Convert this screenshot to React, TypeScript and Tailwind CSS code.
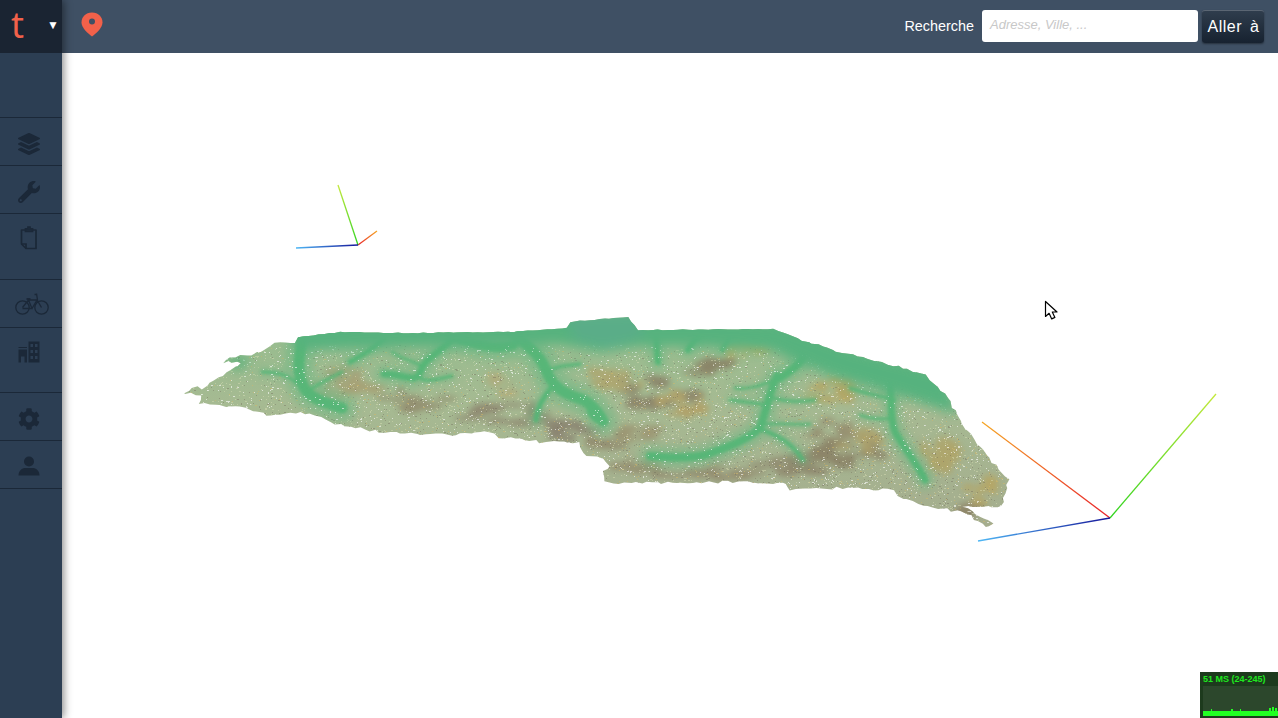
import React, { useMemo } from "react";
import { FaLayerGroup, FaWrench, FaCog } from "react-icons/fa";

const outline: [number, number][] = [
  [185,392],[193,387],[203,388],[213,380],[223,375],[235,367],[242,363],[223,362],[230,358],[257,353],[280,342],[295,343],[298,337],[340,332],[393,333],[513,332],[567,328],[570,322],[600,319],[628,317],[638,330],[773,329],[803,340],[837,352],[873,360],[927,375],[937,387],[948,398],[960,420],[980,447],[1008,480],[1002,507],[963,507],[993,523],[987,528],[967,513],[937,508],[913,502],[897,496],[893,490],[837,488],[790,490],[787,483],[723,482],[657,483],[620,483],[603,481],[603,471],[610,467],[603,458],[587,457],[578,442],[540,442],[500,437],[490,432],[447,435],[380,432],[330,423],[310,413],[267,415],[240,407],[200,404],[202,395],[185,393],
];

function rng(seed: number) {
  let s = seed;
  return () => {
    s = (s * 1664525 + 1013904223) % 4294967296;
    return s / 4294967296;
  };
}

function buildPolygon() {
  const r = rng(7);
  const pts: string[] = [];
  outline.forEach((p, i) => {
    const q = outline[(i + 1) % outline.length];
    const d = Math.hypot(q[0] - p[0], q[1] - p[1]);
    const n = Math.max(1, Math.round(d / 5));
    const amp = p[1] < 345 && q[1] < 345 ? 0.4 : 1.4;
    for (let k = 0; k < n; k++) {
      const t = k / n;
      pts.push(`${(p[0] + (q[0] - p[0]) * t + (r() - 0.5) * amp * 2).toFixed(1)},${(p[1] + (q[1] - p[1]) * t + (r() - 0.5) * amp * 2).toFixed(1)}`);
    }
  });
  return pts.join(" ");
}

function speckles(seed: number, count: number, bias: number) {
  const r = rng(seed);
  let d = "";
  for (let i = 0; i < count; i++) {
    const x = Math.round(185 + r() * 825);
    const y = Math.round(345 + Math.pow(r(), bias) * 185);
    const w = r() > 0.8 ? 2 : 1;
    d += `M${x} ${y}h${w}v1h-${w}z`;
  }
  return d;
}

const valleys: { d: string; w: number }[] = [
  { d: "M303 336 C298 360 296 378 307 392 C315 400 328 404 342 408", w: 11 },
  { d: "M262 372 C282 372 292 376 305 392", w: 3 },
  { d: "M342 372 C330 378 318 384 306 392", w: 3 },
  { d: "M384 338 C372 350 364 354 350 362", w: 5 },
  { d: "M457 333 C445 350 428 356 423 366 C420 372 420 376 414 378 C405 378 398 374 384 374", w: 7 },
  { d: "M420 378 C425 382 435 380 452 376", w: 3 },
  { d: "M422 366 C410 360 400 358 392 352", w: 2.5 },
  { d: "M513 333 C530 348 540 355 546 370 C552 385 560 392 578 398 C588 401 596 408 603 421", w: 11 },
  { d: "M552 386 C546 396 538 402 536 420", w: 5 },
  { d: "M545 372 C556 366 566 366 580 364", w: 3 },
  { d: "M450 336 C480 345 495 350 513 345", w: 10 },
  { d: "M655 332 C658 342 656 352 658 362", w: 6 },
  { d: "M700 334 C695 340 690 345 688 350", w: 6 },
  { d: "M730 335 C728 342 724 346 722 350", w: 4 },
  { d: "M777 376 C770 390 768 405 760 428 C748 440 725 448 705 455 C690 458 670 458 650 456", w: 8 },
  { d: "M758 428 C775 435 790 440 803 460", w: 4 },
  { d: "M768 405 C755 403 745 402 730 400", w: 3 },
  { d: "M772 398 C790 402 800 402 815 400", w: 3 },
  { d: "M775 380 C760 385 750 390 735 388", w: 2.5 },
  { d: "M762 425 C775 422 790 425 810 424", w: 2.5 },
  { d: "M890 380 C892 405 890 420 895 432 C905 450 918 465 925 480", w: 7 },
  { d: "M800 345 C810 355 800 365 780 378", w: 8 },
  { d: "M895 400 C875 395 860 392 850 388", w: 3 },
  { d: "M893 418 C880 420 868 418 860 415", w: 2.5 },
  { d: "M590 402 C585 412 592 420 603 424", w: 4 },
];

const browns: [number, number, number, number, string][] = [
  [710, 368, 28, 10, "#86785f"], [650, 395, 44, 18, "#877b63"], [615, 378, 30, 12, "#b0a36a"], [680, 405, 24, 14, "#b49b5e"],
  [350, 374, 24, 9, "#a89d74"], [415, 398, 36, 11, "#8f8468"], [510, 415, 50, 12, "#8a7f6a"], [560, 430, 36, 9, "#85796a"],
  [610, 440, 24, 8, "#8f8368"], [350, 388, 40, 10, "#a89c70"], [830, 390, 26, 12, "#b9a25c"], [845, 455, 42, 12, "#86795f"],
  [790, 465, 40, 10, "#8a7f66"], [700, 472, 70, 7, "#908469"], [640, 465, 26, 7, "#918568"], [985, 490, 20, 14, "#b8a45e"],
  [940, 450, 20, 24, "#b0a264"], [970, 512, 12, 7, "#8a7d62"], [745, 350, 24, 6, "#b9a961"], [505, 385, 20, 11, "#b3a878"],
  [860, 440, 20, 12, "#ad9b62"], [640, 432, 30, 7, "#9a8e6c"], [830, 430, 24, 9, "#93876a"],
];

function Terrain() {
  const poly = useMemo(buildPolygon, []);
  const white = useMemo(() => speckles(11, 3000, 1), []);
  const pale = useMemo(() => speckles(23, 5000, 1), []);
  const dark = useMemo(() => speckles(37, 3000, 0.8), []);
  const ochre = useMemo(() => speckles(51, 1800, 0.75), []);
  const patches = useMemo(() => {
    const r = rng(99);
    const out: { x: number; y: number; rx: number; ry: number; c: string }[] = [];
    browns.forEach(([x, y, rx, ry, c]) => {
      for (let k = 0; k < 14; k++) {
        const a = r() * Math.PI * 2;
        const m = Math.sqrt(r());
        out.push({ x: x + Math.cos(a) * rx * m, y: y + Math.sin(a) * ry * m, rx: 3 + r() * rx * 0.3, ry: 1.5 + r() * ry * 0.3, c });
      }
    });
    return out;
  }, []);
  return (
    <svg className="absolute left-0 top-0" width="1278" height="718" viewBox="0 0 1278 718">
      <defs>
        <clipPath id="land"><polygon points={poly} /></clipPath>
        <linearGradient id="base" x1="0" y1="325" x2="0" y2="525" gradientUnits="userSpaceOnUse">
          <stop offset="0" stopColor="#95bd8e" />
          <stop offset="0.4" stopColor="#a6ba92" />
          <stop offset="1" stopColor="#a5ad8e" />
        </linearGradient>
        <filter id="b8" x="-30%" y="-30%" width="160%" height="160%"><feGaussianBlur stdDeviation="6" /></filter>
        <filter id="b4" x="-10%" y="-10%" width="120%" height="120%"><feGaussianBlur stdDeviation="4" /></filter>
        <filter id="b3" x="-10%" y="-10%" width="120%" height="120%"><feGaussianBlur stdDeviation="3" /></filter>
        <filter id="b2" x="-10%" y="-10%" width="120%" height="120%"><feGaussianBlur stdDeviation="1.8" /></filter>
        <linearGradient id="bigR" x1="1110" y1="518" x2="982" y2="422" gradientUnits="userSpaceOnUse"><stop offset="0" stopColor="#e8202a" /><stop offset="1" stopColor="#f5a623" /></linearGradient>
        <linearGradient id="bigG" x1="1110" y1="518" x2="1216" y2="394" gradientUnits="userSpaceOnUse"><stop offset="0" stopColor="#2fd31f" /><stop offset="1" stopColor="#c3e83a" /></linearGradient>
        <linearGradient id="bigB" x1="1110" y1="518" x2="978" y2="541" gradientUnits="userSpaceOnUse"><stop offset="0" stopColor="#16169a" /><stop offset="1" stopColor="#4fb8f5" /></linearGradient>
        <linearGradient id="smR" x1="358" y1="245" x2="377" y2="231" gradientUnits="userSpaceOnUse"><stop offset="0" stopColor="#e8202a" /><stop offset="1" stopColor="#f5a623" /></linearGradient>
        <linearGradient id="smG" x1="358" y1="245" x2="338" y2="185" gradientUnits="userSpaceOnUse"><stop offset="0" stopColor="#2fd31f" /><stop offset="1" stopColor="#c3e83a" /></linearGradient>
        <linearGradient id="smB" x1="358" y1="245" x2="296" y2="248" gradientUnits="userSpaceOnUse"><stop offset="0" stopColor="#16169a" /><stop offset="1" stopColor="#4fb8f5" /></linearGradient>
      </defs>

      <g clipPath="url(#land)">
        <rect x="180" y="310" width="840" height="225" fill="url(#base)" />
        <g filter="url(#b3)" opacity="0.8">
          {patches.map((p, i) => (
            <ellipse key={i} cx={p.x} cy={p.y} rx={p.rx} ry={p.ry} fill={p.c} />
          ))}
        </g>
        <path d={dark} fill="#706a5a" opacity="0.4" />
        <path d={ochre} fill="#d6b766" opacity="0.5" />
        <path d={pale} fill="#dfe4bb" opacity="0.42" />
        <g filter="url(#b4)" fill="none" stroke="#70b985" strokeLinecap="round" strokeLinejoin="round" opacity="0.6">
          {valleys.map((v, i) => (
            <path key={i} d={v.d} strokeWidth={v.w * 2.6} />
          ))}
        </g>
        <g filter="url(#b2)" fill="none" stroke="#52b676" strokeLinecap="round" strokeLinejoin="round" opacity="0.9">
          {valleys.map((v, i) => (
            <path key={i} d={v.d} strokeWidth={v.w} />
          ))}
        </g>
        <path d={white} fill="#ffffff" opacity="0.6" />
        <g filter="url(#b8)">
          <path d="M285 322 L640 310 L780 322 L860 350 L945 372 L958 415 L900 396 L830 376 L770 350 L690 346 L640 346 L600 352 L560 344 L460 346 L300 350 Z" fill="#56b27e" />
          <path d="M565 315 L635 312 L645 335 L610 348 L575 340 Z" fill="#5aad88" />
          <path d="M222 358 L252 356 L240 372 Z" fill="#58b27a" />
        </g>
      </g>

      <g strokeWidth="1.3" fill="none">
        <line x1="1110" y1="518" x2="982" y2="422" stroke="url(#bigR)" />
        <line x1="1110" y1="518" x2="1216" y2="394" stroke="url(#bigG)" />
        <line x1="1110" y1="518" x2="978" y2="541" stroke="url(#bigB)" />
        <line x1="358" y1="245" x2="377" y2="231" stroke="url(#smR)" />
        <line x1="358" y1="245" x2="338" y2="185" stroke="url(#smG)" />
        <line x1="358" y1="245" x2="296" y2="248" stroke="url(#smB)" />
      </g>

      <path d="M1045.5 301.5v15l3.6-3.2 2.6 5.6 3.2-1.5-2.6-5.4h4.7Z" fill="#fff" stroke="#000" strokeWidth="1.2" strokeLinejoin="round" />
    </svg>
  );
}

const ClipboardIcon = () => (
  <svg width="22" height="24" viewBox="0 0 22 24" fill="none" stroke="currentColor" strokeWidth="1.7">
    <path d="M3.5 4h14.5v18.5H8l-4.5-4.5Z" strokeLinejoin="round" />
    <path d="M7.5 4V2.8h2.5V1h2v1.8h2.5V5.5h-7ZM3.5 18h4.5v4.5" />
  </svg>
);

const BikeIcon = () => (
  <svg width="34" height="24" viewBox="0 0 34 24" fill="none" stroke="currentColor" strokeWidth="1.3">
    <circle cx="7.5" cy="15.5" r="6.7" />
    <circle cx="26.5" cy="15.5" r="6.7" />
    <path d="M7.5 15.5 13.5 8h8.5l4.5 7.5M13.5 8l3.5 8.5H7.5M22 8l-5 8.5M21.5 1.5l1 6.5M19.5 2.5h2" />
    <path d="M11.5 7h4" strokeWidth="1.8" />
  </svg>
);

const CityIcon = () => (
  <svg width="22" height="22" viewBox="0 0 22 22" fill="currentColor">
    <path d="M0.5 6h8.5v1h-8.5Z" />
    <path d="M0.5 8.5h8.5V21.5H6.5v-6h-3.5v6H0.5Z" />
    <path fillRule="evenodd" d="M10.5 0.5h11v21h-11ZM12.5 3v3h2.5V3ZM17 3v3h2.5V3ZM12.5 9v3h2.5V9ZM17 9v3h2.5V9ZM12.5 15v3h2.5v-3ZM17 15v3h2.5v-3Z" />
  </svg>
);

const UserIcon = () => (
  <svg width="22" height="20" viewBox="0 0 22 20" fill="currentColor">
    <circle cx="11" cy="5.5" r="5" />
    <path d="M0.5 19.5C0.5 14.5 4 12 7.5 12h7c3.5 0 7 2.5 7 7.5Z" />
  </svg>
);

const navItems = [
  { h: "h-[48px] pt-[4px]", ml: "ml-[-5px]", icon: <FaLayerGroup size={22} /> },
  { h: "h-[48px] pt-[5px]", ml: "ml-[-5px]", icon: <FaWrench size={22} /> },
  { h: "h-[66px] pb-[17px]", ml: "ml-[-4px]", icon: <ClipboardIcon /> },
  { h: "h-[48px] pt-[1px]", ml: "ml-[1px]", icon: <BikeIcon /> },
  { h: "h-[65px] pb-[16px]", ml: "ml-[-5px]", icon: <CityIcon /> },
  { h: "h-[48px] pt-[4px]", ml: "ml-[-5px]", icon: <FaCog size={22} /> },
  { h: "h-[48px] pt-[3px]", ml: "ml-[-5px]", icon: <UserIcon /> },
];

export default function App() {
  return (
    <div className="flex h-[718px] w-[1278px] overflow-hidden bg-white font-['Liberation_Sans',sans-serif]">
      <aside className="relative z-10 flex w-[62px] shrink-0 flex-col bg-[#2c3e53] shadow-[2px_0_8px_rgba(0,0,0,0.45)]">
        <div className="flex h-[53px] items-center bg-[#1a2432] pb-[4px]">
          <span className="ml-[11px] w-[37px] font-['Noto_Sans',sans-serif] text-[36px] font-normal leading-none text-[#f2614a]">t</span>
          <span className="ml-[-1px] text-[12px] leading-none text-white">▼</span>
        </div>
        <div className="h-[65px] border-b border-[#1b2838]" />
        {navItems.map((n, i) => (
          <div key={i} className={`flex items-center justify-center border-b border-[#1b2838] text-[#1b2838] ${n.h}`}>
            <div className={`flex ${n.ml}`}>{n.icon}</div>
          </div>
        ))}
      </aside>

      <div className="flex min-w-0 flex-1 flex-col">
        <header className="flex h-[53px] shrink-0 items-center bg-[#3f5064] pr-[14px]">
          <svg className="ml-[18px] mt-[-5px]" width="24" height="26" viewBox="0 0 24 26">
            <path d="M12 1.5C5.6 1.5 1.5 6 1.5 11.5 1.5 17 8 22.5 12 25.5 16 22.5 22.5 17 22.5 11.5 22.5 6 18.4 1.5 12 1.5Z" fill="#f2614a" />
            <circle cx="12" cy="10.5" r="3" fill="#3f5064" />
          </svg>
          <div className="flex-1" />
          <span className="mr-[8px] text-[14.4px] leading-[17px] text-white">Recherche</span>
          <div className="mb-[2px] mr-[4px] flex h-[32px] w-[216px] items-start rounded-[3px] bg-white pl-[8px] pt-[7px] text-[13px] italic leading-[15px] text-[#c8c8c8]">Adresse, Ville, ...</div>
          <button className="mb-[1px] h-[33px] w-[62px] rounded-[3px] border-t border-[#5b6673] bg-gradient-to-b from-[#2f3d4d] to-[#172230] pl-[1px] pt-[1px] text-[16px] tracking-[0.5px] text-white shadow-[0_1px_2px_rgba(0,0,0,0.4)] [word-spacing:3px]">Aller à</button>
        </header>
        <main className="relative flex-1" />
      </div>

      <div className="pointer-events-none absolute left-0 top-0">
        <Terrain />
      </div>

      <div className="absolute left-[1200px] top-[672px] flex h-[46px] w-[78px] flex-col bg-[#1d3a1d] px-[3px]">
        <div className="mt-[2px] h-[11px] whitespace-nowrap text-[9px] font-bold leading-[11px] text-[#1ee81e]">51 MS (24-245)</div>
        <div className="relative mt-[1px] h-[30px] w-[75px] bg-[#2c472c]">
          <div className="absolute bottom-0 left-0 h-[5px] w-full bg-[#22ff22]" />
          <div className="absolute bottom-[5px] left-[8px] h-[2px] w-px bg-[#22ff22]" />
          <div className="absolute bottom-[5px] left-[28px] h-[2px] w-[2px] bg-[#22ff22]" />
          <div className="absolute bottom-[5px] left-[37px] h-[2px] w-px bg-[#22ff22]" />
          <div className="absolute bottom-[5px] left-[66px] h-[3px] w-[2px] bg-[#22ff22]" />
          <div className="absolute bottom-[5px] left-[69px] h-[4px] w-[2px] bg-[#22ff22]" />
          <div className="absolute bottom-[5px] left-[72px] h-[3px] w-[2px] bg-[#22ff22]" />
        </div>
      </div>
    </div>
  );
}
